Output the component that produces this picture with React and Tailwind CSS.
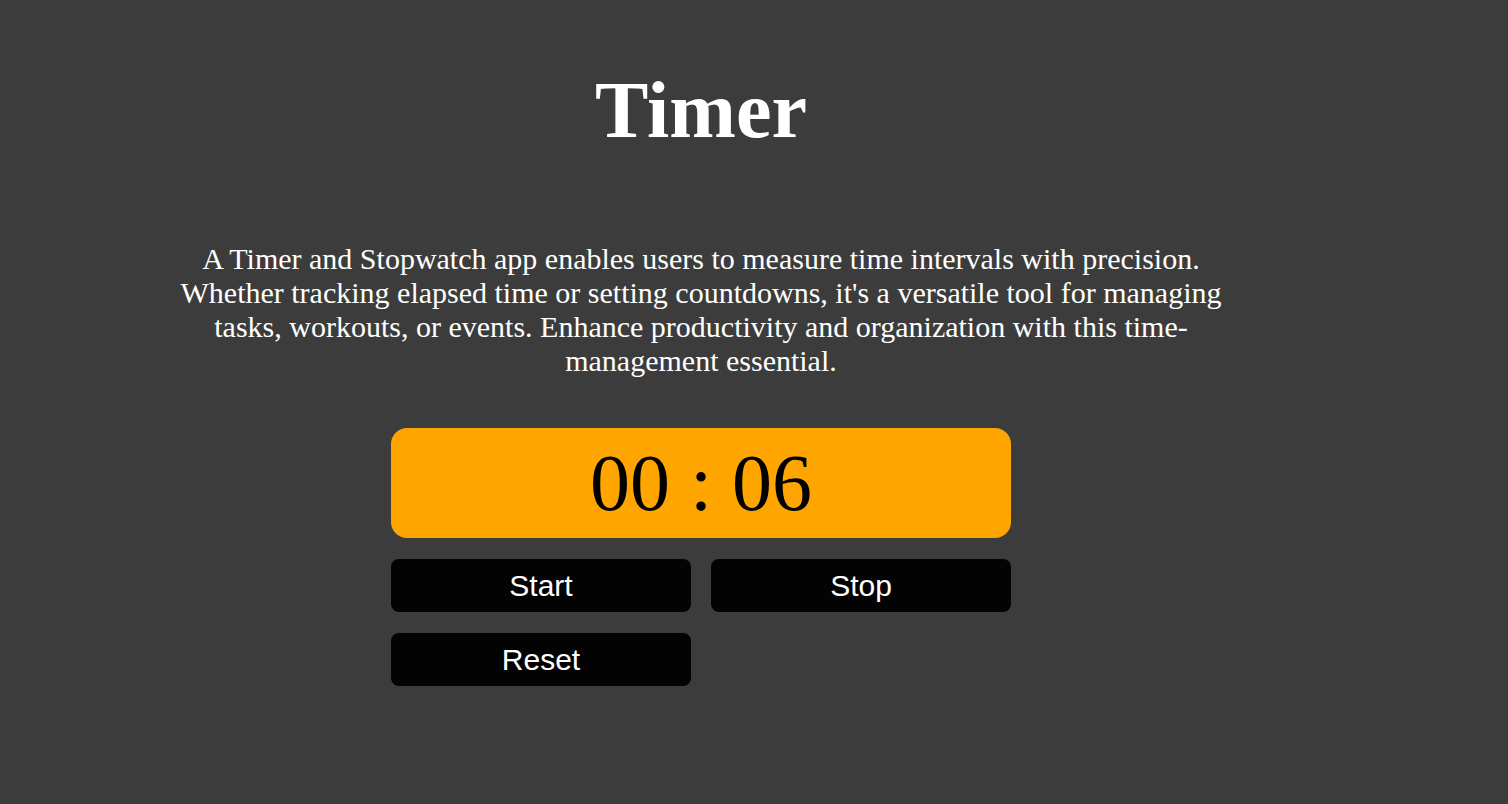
import React, { useState } from 'react';

export default function App() {
  const [secs] = useState(6);
  const mm = String(Math.floor(secs / 60)).padStart(2, '0');
  const ss = String(secs % 60).padStart(2, '0');

  return (
    <div className="min-h-screen w-full bg-[#3c3c3c] text-white">
      <div className="w-[1402px] flex flex-col items-center" style={{ fontFamily: '"Liberation Serif", "Times New Roman", serif' }}>
        <h1 className="mt-[62px] text-[80px] font-bold leading-[96px]">Timer</h1>
        <p className="mt-[84px] w-[1060px] text-center text-[30px] leading-[34px]">
          A Timer and Stopwatch app enables users to measure time intervals with precision. Whether tracking elapsed time or setting countdowns, it's a versatile tool for managing tasks, workouts, or events. Enhance productivity and organization with this time-management essential.
        </p>
        <div className="mt-[50px] w-[620px]">
          <div className="h-[110px] rounded-2xl bg-[#ffa500] flex items-center justify-center text-black text-[80px] leading-none">
            {mm} : {ss}
          </div>
          <div className="mt-[21px] grid grid-cols-2 gap-x-5 gap-y-[21px]" style={{ fontFamily: '"Liberation Sans", Arial, sans-serif' }}>
            <button className="h-[53px] rounded-lg bg-[#030303] text-white text-[30px]">Start</button>
            <button className="h-[53px] rounded-lg bg-[#030303] text-white text-[30px]">Stop</button>
            <button className="h-[53px] rounded-lg bg-[#030303] text-white text-[30px]">Reset</button>
          </div>
        </div>
      </div>
    </div>
  );
}
